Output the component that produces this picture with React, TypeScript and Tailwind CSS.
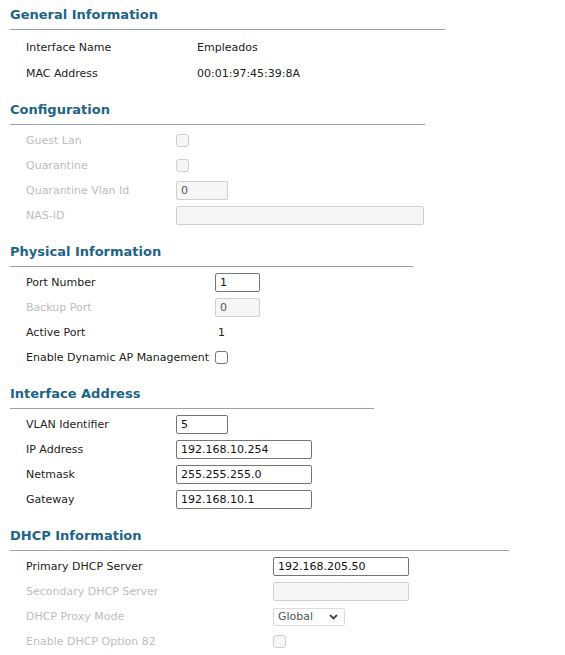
import React from "react";

const font = { fontFamily: '"DejaVu Sans", Verdana, sans-serif' };

function Heading({ title, w }: { title: string; w: string }) {
  return (
    <div className={`${w} ml-[10px] h-[30px] border-b border-[#9aa0b3] pt-[7px]`}>
      <div className="text-[13px] font-bold leading-[16px] text-[#1d6487]">{title}</div>
    </div>
  );
}

function Row({ label, col, disabled, children, h = "h-[25px]" }: { label: string; col: string; disabled?: boolean; children?: React.ReactNode; h?: string }) {
  return (
    <div className={`flex ${h} items-center pl-[26px]`}>
      <div className={`${col} shrink-0 pt-[2px] text-[11px] ${disabled ? "text-[#bdbdbd]" : "text-[#222]"}`}>{label}</div>
      <div className="flex items-center text-[11px] text-[#222]">{children}</div>
    </div>
  );
}

function Input({ w, value, disabled }: { w: string; value?: string; disabled?: boolean }) {
  return (
    <div
      className={`${w} flex h-[19px] items-center rounded-[2px] border px-[4px] pt-[1px] text-[11px] ${
        disabled ? "border-[#d0d0d0] bg-[#f6f6f6] text-[#555]" : "border-[#767676] bg-white text-[#111]"
      }`}
    >
      {value}
    </div>
  );
}

function Check({ disabled }: { disabled?: boolean }) {
  return (
    <div
      className={`h-[13px] w-[13px] rounded-[3px] border ${
        disabled ? "border-[#cfcfcf] bg-[#f6f6f6]" : "border-[#767676] bg-white"
      }`}
    />
  );
}

export default function App() {
  return (
    <div className="h-[655px] w-[565px] overflow-hidden bg-white" style={font}>
      <Heading title="General Information" w="w-[435px]" />
      <div className="mt-[4px]">
        <Row label="Interface Name" col="w-[171px]" h="h-[26px]">
          <span className="pt-[2px]">Empleados</span>
        </Row>
        <Row label="MAC Address" col="w-[171px]" h="h-[26px]">
          <span className="pt-[2px]">00:01:97:45:39:8A</span>
        </Row>
      </div>

      <div className="mt-[9px]">
        <Heading title="Configuration" w="w-[415px]" />
        <div className="mt-[3px]">
          <Row label="Guest Lan" col="w-[150px]" disabled>
            <Check disabled />
          </Row>
          <Row label="Quarantine" col="w-[150px]" disabled>
            <Check disabled />
          </Row>
          <Row label="Quarantine Vlan Id" col="w-[150px]" disabled>
            <Input w="w-[52px]" value="0" disabled />
          </Row>
          <Row label="NAS-ID" col="w-[150px]" disabled>
            <Input w="w-[248px]" disabled />
          </Row>
        </div>
      </div>

      <div className="mt-[9px]">
        <Heading title="Physical Information" w="w-[403px]" />
        <div className="mt-[3px]">
          <Row label="Port Number" col="w-[189px]">
            <Input w="w-[45px]" value="1" />
          </Row>
          <Row label="Backup Port" col="w-[189px]" disabled>
            <Input w="w-[45px]" value="0" disabled />
          </Row>
          <Row label="Active Port" col="w-[189px]">
            <span className="pl-[3px] pt-[2px]">1</span>
          </Row>
          <Row label="Enable Dynamic AP Management" col="w-[189px]">
            <Check />
          </Row>
        </div>
      </div>

      <div className="mt-[9px]">
        <Heading title="Interface Address" w="w-[364px]" />
        <div className="mt-[3px]">
          <Row label="VLAN Identifier" col="w-[150px]">
            <Input w="w-[52px]" value="5" />
          </Row>
          <Row label="IP Address" col="w-[150px]">
            <Input w="w-[136px]" value="192.168.10.254" />
          </Row>
          <Row label="Netmask" col="w-[150px]">
            <Input w="w-[136px]" value="255.255.255.0" />
          </Row>
          <Row label="Gateway" col="w-[150px]">
            <Input w="w-[136px]" value="192.168.10.1" />
          </Row>
        </div>
      </div>

      <div className="mt-[9px]">
        <Heading title="DHCP Information" w="w-[499px]" />
        <div className="mt-[3px]">
          <Row label="Primary DHCP Server" col="w-[247px]">
            <Input w="w-[136px]" value="192.168.205.50" />
          </Row>
          <Row label="Secondary DHCP Server" col="w-[247px]" disabled>
            <Input w="w-[136px]" disabled />
          </Row>
          <Row label="DHCP Proxy Mode" col="w-[247px]" disabled>
            <div className="flex h-[18px] w-[72px] items-center justify-between rounded-[2px] border border-[#dcdcdc] bg-white pl-[4px] pr-[6px] text-[11px] text-[#555]">
              <span className="pt-[1px]">Global</span>
              <svg width="9" height="6" viewBox="0 0 9 6">
                <path d="M1 1l3.5 3.5L8 1" fill="none" stroke="#444" strokeWidth="1.8" />
              </svg>
            </div>
          </Row>
          <Row label="Enable DHCP Option 82" col="w-[247px]" disabled>
            <Check disabled />
          </Row>
        </div>
      </div>
    </div>
  );
}
